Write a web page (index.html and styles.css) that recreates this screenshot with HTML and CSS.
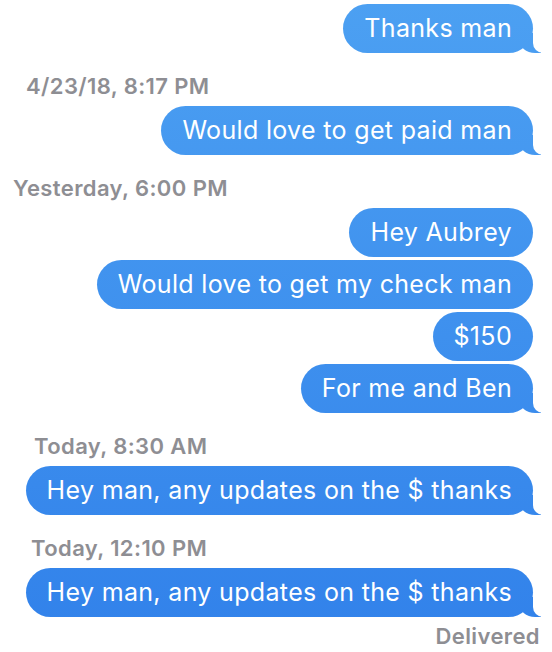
FILE: index.html
```html
<!DOCTYPE html>
<html>

<head>
    <meta name="viewport" content="width=device-width, initial-scale=1">
    <link rel="stylesheet" href="styles.css">
</head>

<body>

    <div class="thread">
        <div class="msg tail">Thanks man</div>

        <div class="stamp stamp-date">4/23/18, 8:17 PM</div>
        <div class="msg tail">Would love to get paid man</div>

        <div class="stamp stamp-yesterday">Yesterday, 6:00 PM</div>
        <div class="msg">Hey Aubrey</div>
        <div class="msg">Would love to get my check man</div>
        <div class="msg">$150</div>
        <div class="msg tail">For me and Ben</div>

        <div class="stamp stamp-morning">Today, 8:30 AM</div>
        <div class="msg tail">Hey man, any updates on the $ thanks</div>

        <div class="stamp stamp-noon">Today, 12:10 PM</div>
        <div class="msg tail">Hey man, any updates on the $ thanks</div>

        <div class="delivered">Delivered</div>
    </div>

</body>

</html>
```

FILE: styles.css
```css
body {
    font-family: Inter, "Noto Sans", sans-serif;
    background-color: #ffffff;
    margin: 0;
    padding: 0;
}

/* Conversation column, sent bubbles hug the right side */
.thread {
    display: flex;
    flex-direction: column;
    align-items: flex-end;
    padding: 4px 19px 0 0;
}

/* Sent message bubble */
.msg {
    position: relative;
    padding: 9px 21px;
    font-size: 25px;
    line-height: 31px;
    letter-spacing: 0.33px;
    color: #ffffff;
    border-radius: 25px;
    background: linear-gradient(#4ca0f2, #3181ea) fixed;
}

.msg + .msg {
    margin-top: 3px;
}

/* Bubble tail on the last message of a group */
.msg.tail::before {
    content: "";
    position: absolute;
    right: -8px;
    bottom: 0;
    width: 22px;
    height: 20px;
    background: inherit;
    border-bottom-left-radius: 16px 14px;
}

.msg.tail::after {
    content: "";
    position: absolute;
    right: -26px;
    bottom: 0;
    width: 26px;
    height: 20px;
    background-color: #ffffff;
    border-bottom-left-radius: 10px;
}

/* Date and time separators */
.stamp {
    align-self: stretch;
    margin: 20px 0 7px;
    font-size: 22px;
    font-weight: 600;
    line-height: 26px;
    letter-spacing: 0.4px;
    color: #8e8e93;
}

.stamp-date {
    padding-left: 26px;
}

.stamp-yesterday {
    padding-left: 13px;
}

.stamp-morning {
    padding-left: 34px;
}

.stamp-noon {
    padding-left: 31px;
}

.delivered {
    margin: 6px -7px 0 0;
    font-size: 22px;
    font-weight: 600;
    line-height: 26px;
    letter-spacing: 0.4px;
    color: #8e8e93;
}
```
